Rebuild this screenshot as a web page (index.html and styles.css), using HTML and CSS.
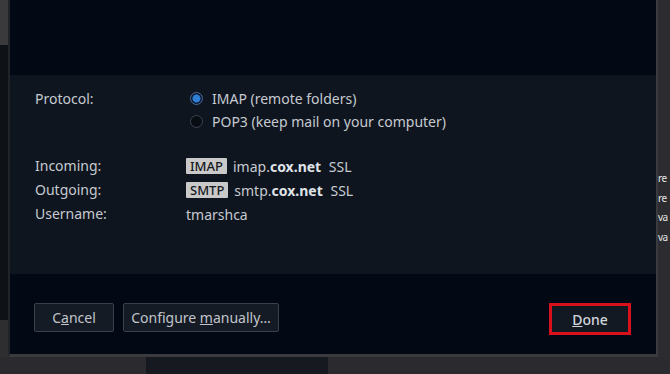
FILE: index.html
```html
<!DOCTYPE html>
<html lang="en">
<head>
    <meta charset="UTF-8">
    <title>Account Setup</title>
    <link rel="stylesheet" href="styles.css">
</head>
<body>
    <div class="screen">
        <div class="side-left"></div>

        <div class="dialog">
            <div class="dialog-top"></div>

            <div class="dialog-body">
                <div class="row protocol-row">
                    <span class="label">Protocol:</span>
                    <div class="radios">
                        <label class="radio"><span class="dot checked"></span>IMAP (remote folders)</label>
                        <label class="radio"><span class="dot"></span>POP3 (keep mail on your computer)</label>
                    </div>
                </div>

                <div class="details">
                    <span class="label">Incoming:</span>
                    <span class="value"><span class="badge">IMAP</span>imap.<b>cox.net</b> SSL</span>
                    <span class="label">Outgoing:</span>
                    <span class="value"><span class="badge">SMTP</span>smtp.<b>cox.net</b> SSL</span>
                    <span class="label">Username:</span>
                    <span class="value">tmarshca</span>
                </div>
            </div>

            <div class="dialog-footer">
                <button class="btn btn-cancel">C<u>a</u>ncel</button>
                <button class="btn btn-manual">Configure <u>m</u>anually…</button>
                <button class="btn btn-done"><u>D</u>one</button>
            </div>
        </div>

        <div class="side-right">
            <span>re</span>
            <span>re</span>
            <span>va</span>
            <span>va</span>
        </div>
    </div>
    <div class="bottom-strip">
        <div class="bottom-block"></div>
    </div>
</body>
</html>
```

FILE: styles.css
```css
/* Page */
body {
    margin: 0;
    background-color: #2b2b2f;
    font-family: "Noto Sans", "Open Sans", sans-serif;
    font-size: 14px;
    color: #c5cad1;
    width: 670px;
    height: 374px;
    overflow: hidden;
}
.screen {
    display: flex;
    height: 357px;
}
.side-left {
    width: 8px;
    background: linear-gradient(#3a3a3c 0, #3a3a3c 45px, #0e1116 45px, #0e1116 320px, #2e2e31 320px);
}
.side-right {
    width: 12px;
    padding-top: 169px;
    display: flex;
    flex-direction: column;
    background-color: #2c2c30;
    color: #e6e6e6;
    font-size: 10px;
    line-height: 19.5px;
    letter-spacing: -0.5px;
    white-space: nowrap;
}

/* Dialog */
.dialog {
    width: 646px;
    border-left: 2px solid #202328;
    border-right: 2px solid #3a3b3f;
    border-bottom: 3px solid #3a3b3f;
    display: flex;
    flex-direction: column;
}
.dialog-top {
    height: 75px;
    background-color: #030914;
}
.dialog-body {
    height: 199px;
    background-color: #0f151e;
    padding: 12px 25px 0;
    box-sizing: border-box;
}
.row, .details {
    display: grid;
    grid-template-columns: 151px 1fr;
}
.label {
    line-height: 23px;
}
.radios {
    display: flex;
    flex-direction: column;
    padding-left: 4px;
}
.radio {
    display: flex;
    align-items: center;
    gap: 9px;
    height: 23px;
}
.dot {
    width: 11px;
    height: 11px;
    border: 1px solid #3d4552;
    border-radius: 50%;
    background-color: #080c13;
    box-sizing: content-box;
}
.dot.checked {
    border-color: #4a6a96;
    background: radial-gradient(circle, #2f7fd6 0, #2f7fd6 3.5px, #0a1830 4.5px);
}
.details {
    margin-top: 21px;
    grid-auto-rows: 24px;
}
.details .label {
    line-height: 24px;
}
.value {
    display: flex;
    align-items: center;
    gap: 6px;
    white-space: pre;
}
.value b {
    color: #dfe3e8;
    margin-left: -6px;
    margin-right: -2px;
}
.badge {
    background-color: #c9c9c9;
    color: #15181c;
    font-size: 13px;
    font-weight: 500;
    line-height: 16px;
    padding: 0 4px;
    border-radius: 1px;
}

/* Footer */
.dialog-footer {
    flex: 1;
    background-color: #030914;
    display: flex;
    align-items: flex-start;
    gap: 9px;
    padding: 29px 25px 0 24px;
}
.btn {
    font-family: inherit;
    font-size: 14px;
    color: #c0c5cc;
    background-color: #151b24;
    border: 1px solid #3a414b;
    border-radius: 2px;
    height: 29px;
    padding: 0 6px;
    white-space: nowrap;
}
.btn-cancel {
    width: 80px;
}
.btn-manual {
    width: 156px;
}
.btn-done {
    margin-left: auto;
    width: 82px;
    height: 32px;
    border: 3px solid #d9111d;
    border-radius: 0;
    background-color: #131922;
    color: #d2d6dc;
    font-weight: 500;
}

/* Below dialog */
.bottom-strip {
    height: 17px;
    padding-left: 146px;
}
.bottom-block {
    width: 182px;
    height: 17px;
    background-color: #161920;
}
```
